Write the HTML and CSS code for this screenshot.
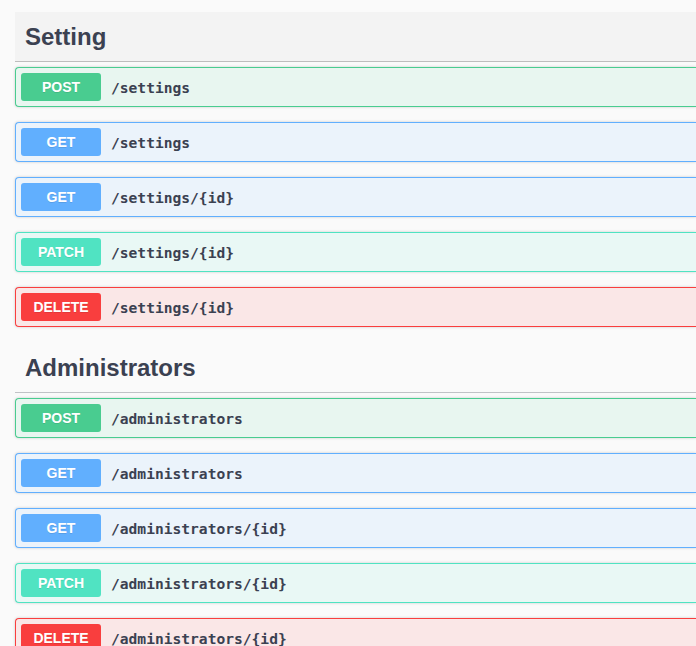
FILE: index.html
```html
<!DOCTYPE html>
<html>
<head>
<meta charset="utf-8">
<link rel="stylesheet" href="styles.css">
</head>
<body>
<div class="wrapper">
  <section class="tag-section">
    <h3 class="tag tag-active"><span>Setting</span></h3>
    <div class="opblock post"><span class="method">POST</span><span class="path">/settings</span></div>
    <div class="opblock get"><span class="method">GET</span><span class="path">/settings</span></div>
    <div class="opblock get"><span class="method">GET</span><span class="path">/settings/{id}</span></div>
    <div class="opblock patch"><span class="method">PATCH</span><span class="path">/settings/{id}</span></div>
    <div class="opblock delete"><span class="method">DELETE</span><span class="path">/settings/{id}</span></div>
  </section>
  <section class="tag-section">
    <h3 class="tag"><span>Administrators</span></h3>
    <div class="opblock post"><span class="method">POST</span><span class="path">/administrators</span></div>
    <div class="opblock get"><span class="method">GET</span><span class="path">/administrators</span></div>
    <div class="opblock get"><span class="method">GET</span><span class="path">/administrators/{id}</span></div>
    <div class="opblock patch"><span class="method">PATCH</span><span class="path">/administrators/{id}</span></div>
    <div class="opblock delete"><span class="method">DELETE</span><span class="path">/administrators/{id}</span></div>
  </section>
</div>
</body>
</html>
```
FILE: styles.css
```css
html, body {
  margin: 0;
  padding: 0;
  background: #fafafa;
  overflow: hidden;
}
.wrapper {
  padding: 12px 0 0 15px;
  font-family: "Liberation Sans", Arial, sans-serif;
  color: #3b4151;
}
.tag-section {
  margin-bottom: 16px;
}
.tag {
  margin: 0 0 5px;
  height: 50px;
  box-sizing: border-box;
  padding: 0 10px;
  display: flex;
  align-items: center;
  font-size: 24px;
  font-weight: 700;
  border-bottom: 1px solid rgba(59, 65, 81, 0.3);
}
.tag-active {
  background: #f3f3f3;
  border-bottom-color: #bdbdbd;
}
.opblock {
  display: flex;
  align-items: center;
  height: 40px;
  box-sizing: border-box;
  padding: 0 5px;
  margin-bottom: 15px;
  border: 1px solid;
  border-right-width: 0;
  border-radius: 4px 0 0 4px;
  box-shadow: 0 0 3px rgba(0, 0, 0, 0.19);
}
.method {
  width: 80px;
  height: 28px;
  line-height: 28px;
  text-align: center;
  border-radius: 3px;
  color: #fff;
  font-size: 14px;
  font-weight: 700;
  text-shadow: 0 1px 0 rgba(0, 0, 0, 0.1);
  flex: none;
}
.path {
  padding: 0 10px;
  font-family: "DejaVu Sans Mono", "Liberation Mono", monospace;
  font-size: 14.6px;
  font-weight: 700;
  color: #3b4151;
}
.post { background: #e8f6f0; border-color: #49cc90; }
.post .method { background: #49cc90; }
.get { background: #ebf3fb; border-color: #61affe; }
.get .method { background: #61affe; }
.patch { background: #e9f8f5; border-color: #50e3c2; }
.patch .method { background: #50e3c2; }
.delete { background: #fae7e7; border-color: #f93e3e; }
.delete .method { background: #f93e3e; }
```
